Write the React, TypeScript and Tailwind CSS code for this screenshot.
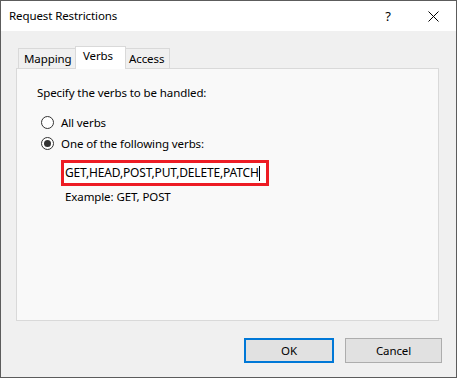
import React from "react";

const FONT = { fontFamily: '"Segoe UI", "Noto Sans", sans-serif' };

function Radio({ checked, label }: { checked?: boolean; label: string }) {
  return (
    <div className="flex items-center h-[21px]">
      <span className="w-[13px] h-[13px] rounded-full border border-[#333333] bg-white flex items-center justify-center">
        {checked && <span className="w-[7px] h-[7px] rounded-full bg-[#333333]" />}
      </span>
      <span className="ml-[7px]">{label}</span>
    </div>
  );
}

export default function App() {
  return (
    <div
      className="w-[457px] h-[378px] border border-[#5c5c5c] flex flex-col text-[11.5px] leading-[16px] tracking-[-0.1px] text-black"
      style={FONT}
    >
      {/* title bar */}
      <div className="h-[30px] bg-white flex items-center pl-[8px]">
        <span className="flex-1">Request Restrictions</span>
        <span className="w-[46px] text-center text-[13px] pl-[2px]">?</span>
        <span className="w-[46px] flex items-center justify-center">
          <svg width="11" height="11" viewBox="0 0 11 11">
            <path d="M0.5 0.5 L10.5 10.5 M10.5 0.5 L0.5 10.5" stroke="#000" strokeWidth="1" />
          </svg>
        </span>
      </div>

      {/* body */}
      <div className="flex-1 bg-[#f0f0f0] flex flex-col pt-[15px] pl-[15px] pr-[17px]">
        <div className="flex items-end pl-[2px] h-[22px]">
          <div className="w-[58px] h-[20px] border border-b-0 border-[#d9d9d9] bg-[#f0f0f0] pl-[5px] pt-[2px]">
            Mapping
          </div>
          <div className="w-[51px] h-[23px] -mb-px border border-b-0 border-[#d9d9d9] bg-white pl-[7px] pt-[1px] relative z-10 -ml-px">
            Verbs
          </div>
          <div className="w-[44px] h-[20px] border border-b-0 border-l-0 border-[#d9d9d9] bg-[#f0f0f0] pl-[3px] pt-[2px]">
            Access
          </div>
        </div>
        <div className="h-[253px] border border-[#d9d9d9] bg-[#f9f9f9] flex flex-col pl-[20px] pt-[16px]">
          <div>Specify the verbs to be handled:</div>
          <div className="mt-[11px] ml-[4px] flex flex-col">
            <Radio label="All verbs" />
            <Radio checked label="One of the following verbs:" />
          </div>
          <div className="ml-[24px] mt-[6px] w-[208px] h-[26px] border-[3px] border-[#ed1c24] bg-white flex items-center pl-[1px] text-[12px] tracking-[-0.15px]">
            <span>GET,HEAD,POST,PUT,DELETE,PATCH</span>
            <span className="w-px h-[15px] bg-black" />
          </div>
          <div className="ml-[28px] mt-[3px]">Example: GET, POST</div>
        </div>
        <div className="flex justify-end mt-[17px] gap-[11px]">
          <button className="w-[90px] h-[25px] border-2 border-[#0078d7] bg-[#e1e1e1]">OK</button>
          <button className="w-[97px] h-[25px] border border-[#adadad] bg-[#e1e1e1] mr-[-3px]">Cancel</button>
        </div>
      </div>
    </div>
  );
}
